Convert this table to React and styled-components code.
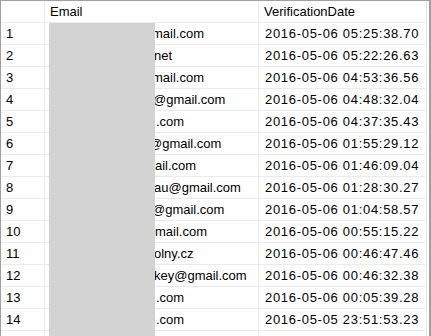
import React from "react";
import styled, { createGlobalStyle } from "styled-components";

const rows = [
   { tail: "mail.com", at: 152, date: "2016-05-06 05:25:38.70" },
   { tail: "net", at: 154, date: "2016-05-06 05:22:26.63" },
   { tail: "mail.com", at: 152, date: "2016-05-06 04:53:36.56" },
   { tail: "@gmail.com", at: 153, date: "2016-05-06 04:48:32.04" },
   { tail: ".com", at: 156, date: "2016-05-06 04:37:35.43" },
   { tail: "@gmail.com", at: 149, date: "2016-05-06 01:55:29.12" },
   { tail: "ail.com", at: 155, date: "2016-05-06 01:46:09.04" },
   { tail: "au@gmail.com", at: 154, date: "2016-05-06 01:28:30.27" },
   { tail: "@gmail.com", at: 152, date: "2016-05-06 01:04:58.57" },
   { tail: "mail.com", at: 155, date: "2016-05-06 00:55:15.22" },
   { tail: "olny.cz", at: 154, date: "2016-05-06 00:46:47.46" },
   { tail: "key@gmail.com", at: 154, date: "2016-05-06 00:46:32.38" },
   { tail: ".com", at: 156, date: "2016-05-06 00:05:39.28" },
   { tail: ".com", at: 156, date: "2016-05-05 23:51:53.23" },
];

const App = () => {
   return (
      <>
         <GlobalStyle />
         <Frame>
            <Row>
               <NumCell />
               <EmailCell>Email</EmailCell>
               <DateCell $head>VerificationDate</DateCell>
            </Row>
            {rows.map((r, i) => (
               <Row key={i}>
                  <NumCell>{i + 1}</NumCell>
                  <EmailCell>
                     <Tail $shift={r.at - 50}>{r.tail}</Tail>
                  </EmailCell>
                  <DateCell>{r.date}</DateCell>
               </Row>
            ))}
            <Row>
               <NumCell />
               <EmailCell />
               <DateCell />
            </Row>
            <Redaction />
         </Frame>
      </>
   );
};

const GlobalStyle = createGlobalStyle`
   html, body {
      margin: 0;
      padding: 0;
      background: #ffffff;
      overflow: hidden;
   }
   body {
      font-family: "Liberation Sans", Arial, sans-serif;
      font-size: 13px;
      color: #000000;
   }
`;

const Frame = styled.div`
   position: relative;
   box-sizing: border-box;
   width: 431px;
   height: 336px;
   overflow: hidden;
   background: #ffffff;
   border-top: 1px solid #a0a0a0;
   border-left: 1px solid #a0a0a0;
   border-right: 2px solid #a0a0a0;
`;

const Row = styled.div`
   display: grid;
   grid-template-columns: 44px 214px 168px;
   height: 22px;
`;

const Cell = styled.div`
   box-sizing: border-box;
   height: 22px;
   padding: 1px 0 0 5px;
   line-height: 20px;
   white-space: nowrap;
   overflow: hidden;
   border-right: 1px solid #ebebeb;
   border-bottom: 1px solid #ebebeb;
`;

const NumCell = styled(Cell)``;

const EmailCell = styled(Cell)`
   display: flex;
`;

const DateCell = styled(Cell)`
   padding-left: ${(p) => (p.$head ? 5 : 6)}px;
   letter-spacing: ${(p) => (p.$head ? 0 : 0.7)}px;
`;

const Tail = styled.span`
   margin-left: ${(p) => p.$shift}px;
`;

const Redaction = styled.div`
   position: absolute;
   left: 48px;
   top: 22px;
   width: 106px;
   bottom: 0;
   background: #d3d3d3;
`;

export default App;
